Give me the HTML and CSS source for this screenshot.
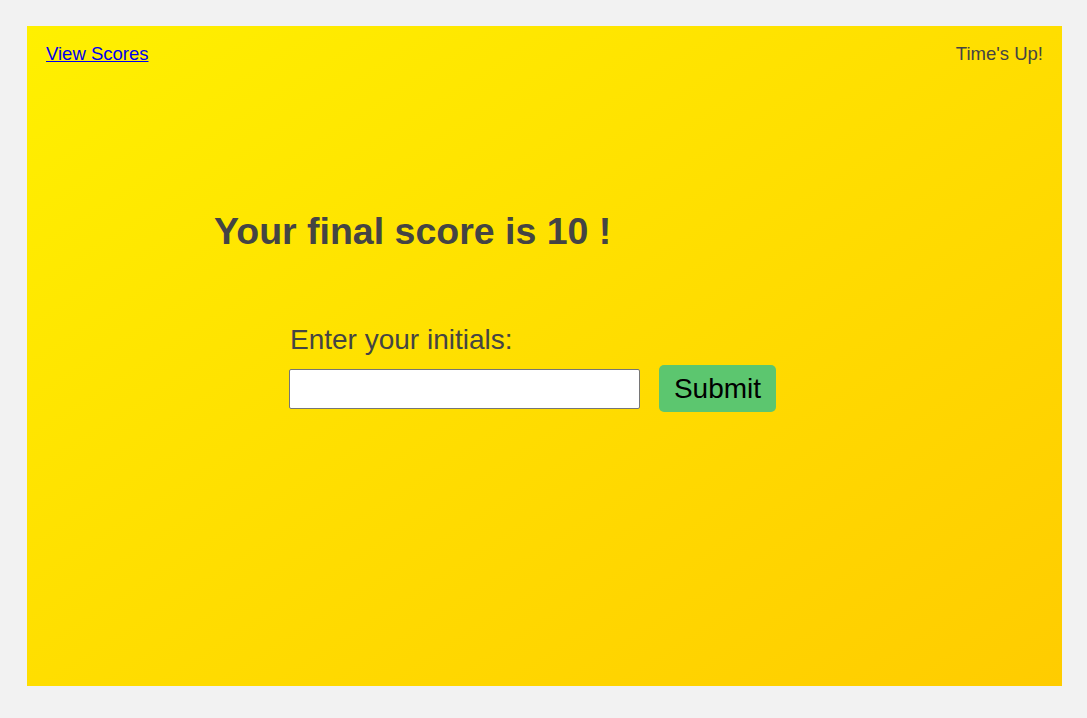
FILE: index.html
```html
<!DOCTYPE html>
<html>
<head>
<meta charset="utf-8">
<link rel="stylesheet" href="styles.css">
</head>
<body>
<div class="card">
  <header class="top">
    <a href="#" class="scores">View Scores</a>
    <span class="timer">Time's Up!</span>
  </header>
  <main class="result">
    <h1 class="final">Your final score is 10 !</h1>
    <form class="entry">
      <label class="prompt" for="initials">Enter your initials:</label>
      <div class="row">
        <input id="initials" class="field" type="text">
        <button type="button" class="submit">Submit</button>
      </div>
    </form>
  </main>
</div>
</body>
</html>
```
FILE: styles.css
```css
html, body {
  margin: 0;
  padding: 0;
  background: #f2f2f2;
  font-family: "Liberation Sans", Arial, sans-serif;
}
body {
  padding: 26px 25px 32px 27px;
}
.card {
  width: 1035px;
  height: 660px;
  box-sizing: border-box;
  background: linear-gradient(to bottom right, #fff000, #ffcc00);
  padding: 17px 19px;
}
.top {
  display: flex;
  justify-content: space-between;
  font-size: 18.5px;
  line-height: 21px;
}
.scores {
  color: #0000ee;
}
.timer {
  color: #444;
}
.result {
  padding-left: 168px;
}
.final {
  margin: 146px 0 0 0;
  font-size: 37.5px;
  font-weight: bold;
  line-height: 43px;
  color: #444;
}
.entry {
  margin: 71px 0 0 75px;
  display: flex;
  flex-direction: column;
}
.prompt {
  font-size: 28px;
  line-height: 32px;
  color: #444;
  margin-left: 1px;
}
.row {
  margin-top: 9px;
  display: flex;
  align-items: center;
  gap: 19px;
}
.field {
  width: 351px;
  height: 40px;
  box-sizing: border-box;
  border: 1px solid #767676;
  border-radius: 2px;
  background: #fff;
  margin: 0;
}
.submit {
  width: 117px;
  height: 47px;
  box-sizing: border-box;
  border: none;
  border-radius: 5px;
  background: #5cc66f;
  color: #000;
  font-family: "Liberation Sans", Arial, sans-serif;
  font-size: 28px;
  padding: 0;
  margin: 0;
}
```
